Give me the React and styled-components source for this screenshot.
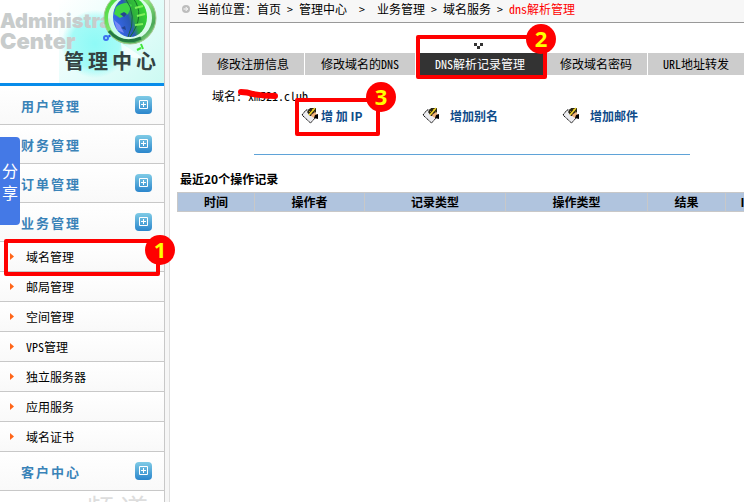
import React from 'react'
import styled, { createGlobalStyle } from 'styled-components'

const crumbs = ['首页', '管理中心', '业务管理', '域名服务']

const services = [
    { name: '域名管理', step: 1 },
    { name: '邮局管理' },
    { name: '空间管理' },
    { latin: 'VPS', name: '管理' },
    { name: '独立服务器' },
    { name: '应用服务' },
    { name: '域名证书' }
]

const menu = [
    { name: '用户管理' },
    { name: '财务管理' },
    { name: '订单管理' },
    { name: '业务管理', items: services },
    { name: '客户中心' }
]

const columns = [
    { name: '时间', width: 77 },
    { name: '操作者', width: 110 },
    { name: '记录类型', width: 141 },
    { name: '操作类型', width: 142 },
    { name: '结果', width: 78 },
    { name: 'IP', width: 42 }
]

const GlobeArt = () => (
    <Art viewBox="0 0 105 83" aria-hidden="true">
        <defs>
            <linearGradient id="ball" x1="0" y1="0.7" x2="1" y2="0.3">
                <stop offset="0" stopColor="#3a6cf4" />
                <stop offset="0.45" stopColor="#2a58b8" />
                <stop offset="0.6" stopColor="#2fae3c" />
                <stop offset="1" stopColor="#35dc32" />
            </linearGradient>
            <linearGradient id="ring" x1="0" y1="0" x2="1" y2="1">
                <stop offset="0" stopColor="#38d52c" />
                <stop offset="0.5" stopColor="#8ee87c" />
                <stop offset="0.8" stopColor="#4aa858" />
                <stop offset="1" stopColor="#b4f4a0" />
            </linearGradient>
        </defs>
        <path d="M62 43 Q76 52 84 58 Q74 60 63 53 Z" fill="#fff" opacity="0.7" />
        <circle cx="70" cy="16" r="24" fill="#d4fbe4" opacity="0.7" />
        <ellipse cx="71" cy="17" rx="17" ry="20" fill="url(#ball)" />
        <path d="M57 7 Q66 0 73 5 L69 14 L61 18 L55 14 Z" fill="#3fd545" />
        <path d="M55 20 L61 25 L65 33 L58 30 Z" fill="#7889f4" />
        <path d="M61 14 l4 -2 3 2 -3 3 z M62 28 l4 -2 1 4 z" fill="#24458f" />
        <path d="M66 -2 Q79 15 69 37" fill="none" stroke="#176643" />
        <path d="M74 -2 Q87 15 71 37" fill="none" stroke="#166e2b" />
        <path d="M76 8 L84 6 M78 16 L86 14 M76 25 L84 24" stroke="#7ff05a" strokeWidth="2" />
        <ellipse cx="71" cy="18" rx="24" ry="24" fill="none" stroke="url(#ring)" strokeWidth="4" />
        <ellipse cx="71" cy="18" rx="26" ry="26" fill="none" stroke="#a7c792" />
        <path d="M50 31 Q63 46 82 38" fill="none" stroke="#247a42" strokeWidth="3" />
        <path d="M82 44 l2 5 M78 50 l4 -2" stroke="#41e639" strokeWidth="2" />
        <circle cx="47" cy="38" r="2" fill="none" stroke="#3c70ee" strokeWidth="2" />
        <path d="M50 35 l1 2" stroke="#2555e8" strokeWidth="2" />
    </Art>
)

const PlusIcon = () => (
    <svg width="17" height="18" viewBox="0 0 17 18" aria-hidden="true">
        <defs>
            <linearGradient id="plus" x1="0" y1="0" x2="0" y2="1">
                <stop offset="0" stopColor="#7fcbe6" />
                <stop offset="1" stopColor="#2b86cc" />
            </linearGradient>
        </defs>
        <rect width="17" height="18" rx="4" fill="url(#plus)" />
        <path d="M4.500 4.500h8v8h-8z M8.500 6v5 M6 8.500h5" fill="none" stroke="#fff" />
    </svg>
)

const WriteIcon = () => (
    <svg width="18" height="18" viewBox="0 0 18 18" aria-hidden="true">
        <path d="M1 8 L5 3 L12 3 L15 10 L9.500 16 Z" fill="#ececf0" stroke="#000" strokeDasharray="1.500 0.500" />
        <path d="M6 5 L9 1 L15 1 L15 5 L12 9 L9 9 Z" fill="#2a2616" />
        <path d="M8 8 L14 1" stroke="#f2d62c" strokeWidth="1.500" />
        <path d="M8 4 l3 3 M11 2 l3 3" stroke="#e5c522" strokeDasharray="1 1" />
        <path d="M10 8 L14 5 L16 8 L14 11 L11 10 Z" fill="#f2b27c" />
        <path d="M14 8 L17 7 L17 12 L13 11 Z" fill="#000" />
    </svg>
)

const BulletIcon = () => (
    <svg width="8" height="8" viewBox="0 0 8 8" aria-hidden="true">
        <circle cx="4" cy="4" r="4" fill="#bdbdbd" />
        <path d="M1.500 4h4 M3.700 2l2 2-2 2" fill="none" stroke="#fff" />
    </svg>
)

const Step = ({ number, box, badge }) => (
    <StepBox $inset={box}>
        <StepBadge $at={badge}>{ number }</StepBadge>
    </StepBox>
)

const Sidebar = () => (
    <SidebarWrapper>
        <Brand>
            <BrandWord $size={20}>Administra</BrandWord>
            <BrandWord $size={22}>Center</BrandWord>
            <GlobeArt />
            <BrandTitle>管理中心</BrandTitle>
        </Brand>
        <nav>
            {
                menu.map((group) => (
                    <React.Fragment key={group.name}>
                        <GroupButton type="button">
                            { group.name } <PlusIcon />
                        </GroupButton>
                        {
                            group.items?.map((item) => (
                                <ServiceLink href="#" key={(item.latin || '') + item.name} $marked={item.step}>
                                    <svg width="4" height="7" viewBox="0 0 4 7" aria-hidden="true">
                                        <path d="M0 0 L4 3.500 L0 7 Z" fill="#ff6418" />
                                    </svg>
                                    <span>{ item.latin && <Latin>{ item.latin }</Latin> }{ item.name }</span>
                                    { item.step && <Step number={item.step} box="-3px 4px -5px 4px" badge="-8px -19px" /> }
                                </ServiceLink>
                            ))
                        }
                    </React.Fragment>
                ))
            }
        </nav>
        <Watermark>频道</Watermark>
        <ShareButton type="button">分享</ShareButton>
    </SidebarWrapper>
)

const App = () => {
    return (
        <Page>
            <GlobalStyle />
            <Sidebar />
            <Main>
                <Breadcrumb>
                    <BulletIcon />
                    <span>当前位置：</span>
                    {
                        crumbs.map((name, index) => (
                            <React.Fragment key={name}>
                                <a href="#">{ name }</a>
                                <Separator $wide={index === 1}>&gt;</Separator>
                            </React.Fragment>
                        ))
                    }
                    <Current><Latin>dns</Latin>解析管理</Current>
                </Breadcrumb>
                <Panel>
                    <Tabs>
                        <Tab href="#" $pad={15}>修改注册信息</Tab>
                        <Tab href="#" $pad={16}>修改域名的<Latin>DNS</Latin></Tab>
                        <Tab href="#" $pad={19} $active>
                            <Pointer viewBox="0 0 9 6" aria-hidden="true">
                                <path d="M0 0h3v3h3v-3h3v3h-3v3h-3v-3h-3z" fill="#333" />
                            </Pointer>
                            <Latin>DNS</Latin>解析记录管理
                            <Step number={2} box="-18px -3px -4px 0" badge="-15px -13px" />
                        </Tab>
                        <Tab href="#" $pad={15}>修改域名密码</Tab>
                        <Tab href="#" $pad={15}><Latin>URL</Latin>地址转发</Tab>
                    </Tabs>
                    <Domain>
                        域名<Latin>: xm521.club</Latin>
                        <Scribble viewBox="0 0 42 12" aria-hidden="true">
                            <path d="M4 3 Q10 3 16 5 Q27 7 38 7" fill="none" stroke="#f00" strokeWidth="6" strokeLinecap="round" />
                        </Scribble>
                    </Domain>
                    <Actions>
                        <ActionLink href="#" $gap={2}>
                            <WriteIcon /> 增 加 IP
                            <Step number={3} box="-8px 42px -10px -6px" badge="-20px -20px" />
                        </ActionLink>
                        <ActionLink href="#" $gap={10}><WriteIcon /> 增加别名</ActionLink>
                        <ActionLink href="#" $gap={10}><WriteIcon /> 增加邮件</ActionLink>
                    </Actions>
                    <Rule />
                </Panel>
                <Records>
                    <caption>最近20个操作记录</caption>
                    <thead>
                        <tr>
                            {
                                columns.map((column) => (
                                    <HeadCell key={column.name} $width={column.width}>{ column.name }</HeadCell>
                                ))
                            }
                        </tr>
                    </thead>
                </Records>
            </Main>
        </Page>
    )
}

const GlobalStyle = createGlobalStyle`
    * {
        box-sizing: border-box;
    }

    body {
        margin: 0;
        background: #fff;
        color: #000;
        font: 12px/20px 'Noto Sans CJK SC', sans-serif;
        overflow: hidden;
    }

    a {
        color: inherit;
        text-decoration: none;
    }

    button {
        border: 0;
        font-family: inherit;
        cursor: pointer;
    }
`

const Page = styled.div`
    display: grid;
    grid-template-columns: 170px minmax(0, 1fr);
    height: 100vh;
`

const SidebarWrapper = styled.aside`
    position: relative;
    z-index: 1;
    min-height: 0;
    padding-right: 5px;
    border-right: 1px solid #ddd;
    background: linear-gradient(to right, #fff 164px, #c8c8c8 164px, #c8c8c8 165px, #f6f6f6 165px);
`

const Brand = styled.header`
    position: relative;
    display: flex;
    flex-direction: column;
    height: 86px;
    padding-top: 11px;
    border-bottom: 3px solid #078cea;
    background:
        radial-gradient(circle at 95px 44px, #8ffaf6 0, #a4fbf7 24px, transparent 34px),
        linear-gradient(135deg, #fff 0, #e6fdfb 50%, #ccfaf2 100%) right / 105px 100% no-repeat;
    overflow: hidden;
    white-space: nowrap;
`

const BrandWord = styled.span`
    color: #c8cccc;
    font: 900 ${props => props.$size}px/20px Inter, sans-serif;
`

const Art = styled.svg`
    position: absolute;
    top: 0;
    right: 0;
    width: 105px;
    height: 83px;
`

const BrandTitle = styled.strong`
    position: absolute;
    right: 4px;
    bottom: 10px;
    color: #344242;
    font-size: 20px;
    line-height: 24px;
    letter-spacing: 4px;
`

const GroupButton = styled.button`
    display: flex;
    align-items: center;
    justify-content: space-between;
    width: 100%;
    height: 39px;
    padding: 0 12px 0 21px;
    border-bottom: 1px solid #c8c8c8;
    background: linear-gradient(#fff, #f9f9f9);
    color: #3a83b8;
    font-size: 13px;
    font-weight: bold;
    letter-spacing: 2px;
`

const ServiceLink = styled.a`
    position: relative;
    z-index: ${props => props.$marked ? 1 : 0};
    display: flex;
    align-items: center;
    gap: 12px;
    height: 30px;
    padding-left: 10px;
    border-bottom: 1px solid #c8c8c8;
    background: linear-gradient(#fff, #f9f9f9);
`

const Watermark = styled.div`
    height: 11px;
    padding-left: 86px;
    overflow: hidden;
    color: #ddd;
    font-size: 28px;
    line-height: 34px;
    letter-spacing: 6px;
`

const ShareButton = styled.button`
    position: absolute;
    z-index: 1;
    top: 137px;
    left: 0;
    width: 20px;
    height: 88px;
    padding: 0 2px;
    border-radius: 0 4px 4px 0;
    background: #4479e6;
    color: #fff;
    font-size: 16px;
    line-height: 22px;
`

const Latin = styled.span`
    font-feature-settings: 'hwid';
    line-height: 1;
`

const Main = styled.main`
    min-width: 0;
    overflow: hidden;
    white-space: nowrap;
`

const Breadcrumb = styled.nav`
    display: flex;
    align-items: center;
    height: 23px;
    padding: 0 0 4px 12px;
    border-bottom: 1px solid #999;
    background: #f7f7f7;

    svg {
        margin-right: 7px;
    }
`

const Separator = styled.span`
    width: ${props => props.$wide ? 30 : 18}px;
    font-feature-settings: 'hwid';
    text-align: center;
`

const Current = styled.span`
    color: #f00;
`

const Panel = styled.section`
    padding: 30px 0 0 32px;
`

const Tabs = styled.nav`
    display: flex;
    gap: 1px;
`

const Tab = styled.a`
    position: relative;
    z-index: ${props => props.$active ? 1 : 0};
    padding: 0 ${props => props.$pad}px;
    background: ${props => props.$active ? '#333' : '#ccc'};
    color: ${props => props.$active ? '#fff' : '#000'};
    line-height: 22px;
`

const Pointer = styled.svg`
    position: absolute;
    top: -10px;
    left: calc(50% - 6px);
    width: 9px;
    height: 6px;
`

const Domain = styled.div`
    position: relative;
    margin-top: 11px;
    padding-left: 10px;

    ${Latin} {
        white-space: pre;
    }
`

const Scribble = styled.svg`
    position: absolute;
    top: 3px;
    left: 35px;
    width: 42px;
    height: 12px;
`

const Actions = styled.div`
    display: grid;
    grid-template-columns: 121px 140px auto;
    padding-left: 99px;
`

const ActionLink = styled.a`
    position: relative;
    display: flex;
    align-items: center;
    gap: ${props => props.$gap}px;
    color: #0f4c8a;
    font-weight: bold;
`

const Rule = styled.hr`
    width: 436px;
    max-width: 100%;
    margin: 28px 0 0 52px;
    border: 0;
    border-top: 1px solid #5fa3d8;
`

const Records = styled.table`
    width: calc(100% + 16px);
    margin: 14px 0 0 7px;
    border-collapse: collapse;
    table-layout: fixed;

    caption {
        padding: 0 0 3px 3px;
        font-weight: bold;
        text-align: left;
    }
`

const HeadCell = styled.th`
    width: ${props => props.$width}px;
    height: 19px;
    padding: 0;
    border: 1px solid #c8c8c8;
    background: #b0c4de;
    line-height: 18px;
`

const StepBox = styled.span`
    position: absolute;
    inset: ${props => props.$inset};
    border: 4px solid #f00;
    border-radius: 2px;
    pointer-events: none;
`

const StepBadge = styled.span`
    position: absolute;
    inset: ${props => props.$at} auto auto;
    width: 30px;
    height: 30px;
    border-radius: 50%;
    background: #f00;
    color: #ff0;
    font: bold 22px/28px 'Open Sans', sans-serif;
    text-align: center;
`

export default App
